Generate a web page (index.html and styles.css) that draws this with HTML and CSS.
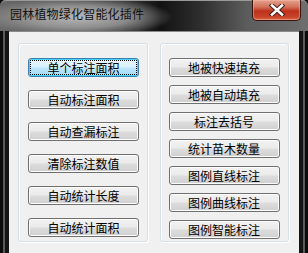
FILE: index.html
```html
<!DOCTYPE html>
<html lang="zh">
<head>
    <meta charset="UTF-8">
    <link rel="stylesheet" href="styles.css">
    <title>园林植物绿化智能化插件</title>
</head>
<body>
    <div class="window">
        <div class="titlebar">
            <span class="title">园林植物绿化智能化插件</span>
            <button class="close" aria-label="关闭">
                <svg width="16" height="12" viewBox="0 0 16 12">
                    <path d="M3 1.5 L13 10.5 M13 1.5 L3 10.5" stroke="#3a1a14" stroke-width="4.4" stroke-linecap="square"/>
                    <path d="M3 1.5 L13 10.5 M13 1.5 L3 10.5" stroke="#fff" stroke-width="2.6" stroke-linecap="square"/>
                </svg>
            </button>
        </div>
        <div class="client">
            <div class="group group-left">
                <button class="btn btn-focus"><span>单个标注面积</span></button>
                <button class="btn"><span>自动标注面积</span></button>
                <button class="btn"><span>自动查漏标注</span></button>
                <button class="btn"><span>清除标注数值</span></button>
                <button class="btn"><span>自动统计长度</span></button>
                <button class="btn"><span>自动统计面积</span></button>
            </div>
            <div class="group group-right">
                <button class="btn"><span>地被快速填充</span></button>
                <button class="btn"><span>地被自动填充</span></button>
                <button class="btn"><span>标注去括号</span></button>
                <button class="btn"><span>统计苗木数量</span></button>
                <button class="btn"><span>图例直线标注</span></button>
                <button class="btn"><span>图例曲线标注</span></button>
                <button class="btn"><span>图例智能标注</span></button>
            </div>
        </div>
    </div>
</body>
</html>
```

FILE: styles.css
```css
body {
    margin: 0;
    background: #000;
    font-family: "Noto Sans CJK SC", "DejaVu Sans", sans-serif;
}

.window {
    width: 308px;
    height: 253px;
    display: flex;
    flex-direction: column;
    background:
        linear-gradient(90deg, #0c0c0c 0, #0c0c0c 3px, #5a5a5a 3px, #5a5a5a 5px, #141414 5px, #141414 9px, transparent 9px),
        linear-gradient(270deg, #0c0c0c 0, #0c0c0c 3px, #5a5a5a 3px, #5a5a5a 5px, #141414 5px, #141414 9px, transparent 9px),
        #141414;
    overflow: hidden;
}

.titlebar {
    height: 31px;
    flex: none;
    display: flex;
    justify-content: space-between;
    align-items: flex-start;
    box-sizing: border-box;
    border-top: 1px solid #9a9a9a;
    border-radius: 6px 6px 0 0;
    background:
        radial-gradient(ellipse 95px 20px at 78px 16px, rgba(190, 190, 190, 0.95) 0, rgba(160, 160, 160, 0.8) 55%, rgba(40, 40, 40, 0) 100%),
        linear-gradient(90deg, #6a6a6a 0, #2a2a2a 45%, #121212 52%, #2e2e2e 65%, #5c5c5c 80%, #6e6e6e 100%);
}

.title {
    margin: 5px 0 0 10px;
    font-size: 12px;
    line-height: 16px;
    letter-spacing: 0.2px;
    color: #111;
}

.close {
    width: 49px;
    height: 21px;
    margin: -1px 7px 0 0;
    padding: 0;
    display: flex;
    align-items: center;
    justify-content: center;
    border: 1px solid #3a1410;
    border-top: none;
    border-radius: 0 0 5px 5px;
    background: linear-gradient(#e4a38e 0, #d2705a 35%, #bd321c 55%, #c8432a 85%, #d86a4a 100%);
    box-shadow: inset 0 0 0 1px rgba(255, 190, 170, 0.45);
}

.client {
    flex: 1;
    margin: 0 9px;
    padding: 11px 10px 11px 9px;
    display: flex;
    gap: 12px;
    background: #f0f0f0;
    border-top: 1px solid #8a8a8a;
    box-sizing: border-box;
}

.group {
    display: flex;
    flex-direction: column;
    padding-top: 14px;
    border: 1px solid #d5dfe5;
    border-radius: 3px;
    box-shadow: inset 1px 1px 0 #fff, 1px 1px 0 #fff;
}

.group-left {
    width: 129px;
    padding-left: 9px;
    gap: 13px;
}

.group-right {
    width: 130px;
    padding-left: 8px;
    gap: 8px;
}

.btn {
    width: 111px;
    height: 19px;
    padding: 0;
    box-sizing: border-box;
    border: 1px solid #707070;
    border-radius: 3px;
    background: linear-gradient(#f2f2f2 0, #ebebeb 48%, #dddddd 52%, #cfcfcf 100%);
    box-shadow: inset 0 0 0 1px #fcfcfc;
    font-family: inherit;
    font-size: 12px;
    line-height: 15px;
    color: #000;
    display: flex;
    align-items: center;
    justify-content: center;
}

.btn-focus {
    border-color: #3c7fb1;
    box-shadow: inset 0 0 0 1px #48d2fc;
    background: linear-gradient(#eaf6fd 0, #d9f0fc 48%, #bee6fd 52%, #a7d9f5 100%);
}

.btn-focus span {
    display: block;
    width: 105px;
    outline: 1px dotted #000;
    outline-offset: 0;
    line-height: 13px;
}
```
